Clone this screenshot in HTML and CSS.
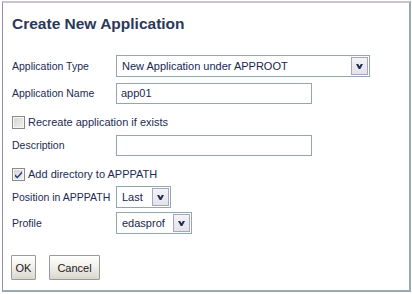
FILE: index.html
```html
<!DOCTYPE html>
<html lang="en">
<head>
  <meta charset="UTF-8">
  <title>Create New Application</title>
  <link rel="stylesheet" href="styles.css">
</head>
<body>
  <div class="panel">
    <h1 class="title">Create New Application</h1>

    <div class="form">
      <div class="row">
        <span class="label">Application Type</span>
        <div class="select select-type">
          <span class="value">New Application under APPROOT</span>
          <span class="arrow"><svg width="7" height="5" viewBox="0 0 7 5"><path d="M0 0h2.2l1.3 2.3L4.8 0H7L4.3 5H2.7z" fill="#1f2c55"/></svg></span>
        </div>
      </div>

      <div class="row row-input">
        <span class="label">Application Name</span>
        <div class="input">app01</div>
      </div>

      <div class="row check">
        <span class="box"></span>
        <span class="check-text">Recreate application if exists</span>
      </div>

      <div class="row">
        <span class="label">Description</span>
        <div class="input"></div>
      </div>

      <div class="row check">
        <span class="box"><svg width="9" height="9" viewBox="0 0 9 9"><path d="M1 4.2l2.3 2.3L8 1.2V3.6L3.3 8.6 1 6.4z" fill="#2a3a80"/></svg></span>
        <span class="check-text">Add directory to APPPATH</span>
      </div>

      <div class="row">
        <span class="label">Position in APPPATH</span>
        <div class="select select-pos">
          <span class="value">Last</span>
          <span class="arrow"><svg width="7" height="5" viewBox="0 0 7 5"><path d="M0 0h2.2l1.3 2.3L4.8 0H7L4.3 5H2.7z" fill="#1f2c55"/></svg></span>
        </div>
      </div>

      <div class="row">
        <span class="label">Profile</span>
        <div class="select select-profile">
          <span class="value">edasprof</span>
          <span class="arrow"><svg width="7" height="5" viewBox="0 0 7 5"><path d="M0 0h2.2l1.3 2.3L4.8 0H7L4.3 5H2.7z" fill="#1f2c55"/></svg></span>
        </div>
      </div>
    </div>

    <div class="actions">
      <button class="btn btn-ok">OK</button>
      <button class="btn btn-cancel">Cancel</button>
    </div>
  </div>
</body>
</html>
```

FILE: styles.css
```css
body {
  margin: 0;
  background: #fff;
  font-family: "Liberation Sans", Arial, sans-serif;
  font-size: 10.5px;
  color: #1c2b52;
}

/* cadre du dialogue */
.panel {
  box-sizing: border-box;
  width: 409px;
  height: 291px;
  margin: 1px 0 0 2px;
  padding: 11px 0 0 9px;
  border-top: 2px solid #cbc5cf;
  border-left: 1px solid #9b8fae;
  border-right: 2px solid #97aaae;
  border-bottom: 2px solid #97aaae;
}

.title {
  margin: 0;
  font-size: 15.5px;
  line-height: 20px;
  font-weight: bold;
  color: #2b3858;
}

.form {
  margin-top: 21px;
  display: flex;
  flex-direction: column;
  gap: 4px;
}

.row {
  display: flex;
  align-items: center;
  height: 22px;
}

.row-input {
  height: 23px;
}

.row-input .input {
  margin-top: 2px;
}

.label {
  width: 104px;
  flex-shrink: 0;
}

/* champs */
.input {
  box-sizing: border-box;
  width: 196px;
  height: 21px;
  padding: 0 4px;
  line-height: 19px;
  font-size: 11px;
  border: 1px solid #8fa8a8;
  background: #fff;
}

.select {
  box-sizing: border-box;
  display: flex;
  align-items: center;
  height: 22px;
  padding: 1px;
  font-size: 11px;
  color: #182650;
  border: 1px solid #8fa8a8;
  background: #fff;
}

.select .value {
  flex: 1;
  padding-left: 4px;
  white-space: nowrap;
}

.select .arrow {
  box-sizing: border-box;
  display: flex;
  align-items: center;
  justify-content: center;
  width: 17px;
  height: 18px;
  border: 1px solid #a7a5c4;
  background: linear-gradient(#f4f4f6, #e2e2e8);
}

.select-type { width: 254px; }
.select-pos { width: 55px; }
.select-profile { width: 76px; }

/* cases à cocher */
.check {
  padding-top: 6px;
  box-sizing: border-box;
  height: 22px;
  font-size: 11px;
}

.box {
  box-sizing: border-box;
  display: flex;
  align-items: center;
  justify-content: center;
  width: 13px;
  height: 13px;
  margin-right: 3px;
  border: 1px solid #8a8a8a;
  box-shadow: inset 0 0 0 1px #f6f6f6;
  background: linear-gradient(135deg, #d2d2d2, #f2f2f2);
}

/* boutons */
.actions {
  margin-top: 21px;
  margin-left: -1px;
  display: flex;
  gap: 13px;
}

.btn {
  box-sizing: border-box;
  height: 25px;
  padding: 0;
  font-family: "Liberation Sans", Arial, sans-serif;
  font-size: 11px;
  color: #1a1a1a;
  border: 1px solid #9a9a9a;
  border-radius: 1px;
  background: linear-gradient(#ffffff, #f2f1ec 45%, #d9d6cc);
}

.btn-ok { width: 25px; }
.btn-cancel { width: 51px; }
```
